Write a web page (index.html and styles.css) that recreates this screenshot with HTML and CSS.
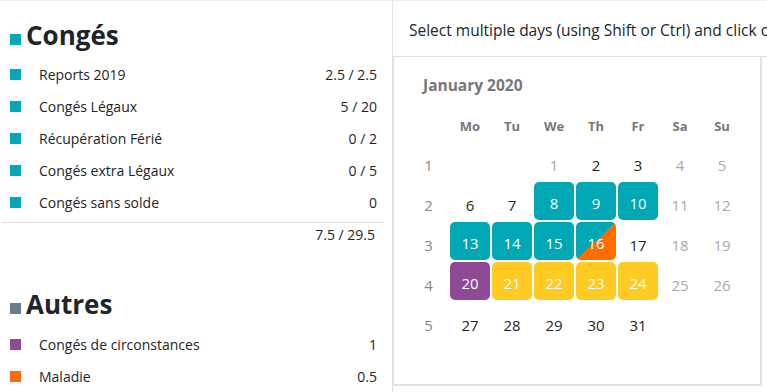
FILE: index.html
```html
<!doctype html>
<html lang="fr">
<head>
  <meta charset="UTF-8" />
  <meta name="viewport" content="width=device-width, initial-scale=1.0" />
  <title>Congés - Planning</title>
  <link rel="stylesheet" href="styles.css">
</head>
<body>
  <div class="app">
    <aside class="summary">
      <section class="group">
        <h2 class="group-title"><span class="swatch teal"></span>Congés</h2>
        <ul class="leave-list">
          <li><span class="swatch teal"></span><span class="name">Reports 2019</span><span class="value">2.5 / 2.5</span></li>
          <li><span class="swatch teal"></span><span class="name">Congés Légaux</span><span class="value">5 / 20</span></li>
          <li><span class="swatch teal"></span><span class="name">Récupération Férié</span><span class="value">0 / 2</span></li>
          <li><span class="swatch teal"></span><span class="name">Congés extra Légaux</span><span class="value">0 / 5</span></li>
          <li><span class="swatch teal"></span><span class="name">Congés sans solde</span><span class="value">0</span></li>
        </ul>
        <div class="total">7.5 / 29.5</div>
      </section>

      <section class="group group-other">
        <h2 class="group-title"><span class="swatch slate"></span>Autres</h2>
        <ul class="leave-list">
          <li><span class="swatch purple"></span><span class="name">Congés de circonstances</span><span class="value">1</span></li>
          <li><span class="swatch orange"></span><span class="name">Maladie</span><span class="value">0.5</span></li>
        </ul>
      </section>
    </aside>

    <main class="planner">
      <div class="hint">Select multiple days (using Shift or Ctrl) and click on the button to create a leave request</div>

      <div class="months">
        <div class="month">
          <div class="month-title">January 2020</div>
          <div class="cal-grid">
            <span class="wk"></span>
            <span class="dow">Mo</span><span class="dow">Tu</span><span class="dow">We</span><span class="dow">Th</span><span class="dow">Fr</span><span class="dow">Sa</span><span class="dow">Su</span>

            <span class="wk">1</span>
            <span class="day"></span><span class="day"></span>
            <span class="day off">1</span><span class="day">2</span><span class="day">3</span><span class="day off">4</span><span class="day off">5</span>

            <span class="wk">2</span>
            <span class="day">6</span><span class="day">7</span>
            <span class="day"><b class="mark teal">8</b></span><span class="day"><b class="mark teal">9</b></span><span class="day"><b class="mark teal">10</b></span>
            <span class="day off">11</span><span class="day off">12</span>

            <span class="wk">3</span>
            <span class="day"><b class="mark teal">13</b></span><span class="day"><b class="mark teal">14</b></span><span class="day"><b class="mark teal">15</b></span>
            <span class="day"><b class="mark split">16</b></span><span class="day">17</span>
            <span class="day off">18</span><span class="day off">19</span>

            <span class="wk">4</span>
            <span class="day"><b class="mark purple">20</b></span><span class="day"><b class="mark yellow">21</b></span><span class="day"><b class="mark yellow">22</b></span>
            <span class="day"><b class="mark yellow">23</b></span><span class="day"><b class="mark yellow">24</b></span>
            <span class="day off">25</span><span class="day off">26</span>

            <span class="wk">5</span>
            <span class="day">27</span><span class="day">28</span><span class="day">29</span><span class="day">30</span><span class="day">31</span>
            <span class="day"></span><span class="day"></span>
          </div>
        </div>
      </div>
    </main>
  </div>
</body>
</html>
```

FILE: styles.css
```css
* {
  box-sizing: border-box;
  margin: 0;
  padding: 0;
}

body {
  font-family: 'Open Sans', 'Noto Sans', sans-serif;
  font-size: 14px;
  color: #212529;
  background: #fff;
  width: 767px;
  height: 392px;
  overflow: hidden;
}

.app {
  display: flex;
  height: 392px;
  border-top: 1px solid #eeeeee;
}

/* ===== Left summary ===== */
.summary {
  width: 393px;
  flex-shrink: 0;
  border-right: 1px solid #e2e2e4;
  padding: 16px 15px 0 2px;
}

.group-title {
  display: flex;
  align-items: baseline;
  font-size: 26px;
  font-weight: 700;
  line-height: 36px;
  color: #212529;
  padding-left: 8px;
}

.group-title .swatch {
  margin-right: 5px;
}

.swatch {
  display: inline-block;
  width: 11px;
  height: 11px;
  flex-shrink: 0;
}

.teal { background: #00a7b4; }
.slate { background: #687c89; }
.purple { background: #8e4a96; }
.orange { background: #ff6c00; }
.yellow { background: #ffca22; }

.leave-list {
  list-style: none;
  margin-top: 5px;
  padding-left: 8px;
}

.leave-list li {
  display: flex;
  align-items: center;
  height: 32px;
}

.leave-list .name {
  flex: 1;
  margin-left: 18px;
}

.leave-list .value {
  text-align: right;
}

.total {
  margin-top: 4px;
  border-top: 1px solid #dddddd;
  text-align: right;
  line-height: 24px;
  padding-right: 9px;
  margin-right: -7px;
}

.group-other {
  margin-top: 39px;
}

.group-other .leave-list {
  margin-top: 6px;
}

/* ===== Right planner ===== */
.planner {
  flex: 1;
  min-width: 0;
  display: flex;
  flex-direction: column;
}

.hint {
  height: 56px;
  line-height: 58px;
  padding-left: 16px;
  font-size: 15.5px;
  white-space: nowrap;
  overflow: hidden;
  border-bottom: 1px solid #e2e2e4;
  color: #212529;
}

.months {
  display: flex;
}

.month {
  width: 369px;
  height: 329px;
  border-left: 1px solid #e2e2e4;
  border-right: 2px solid #e2e2e4;
  border-bottom: 2px solid #e2e2e4;
  padding: 18px 0 0 14px;
}

.month-title {
  font-size: 15.5px;
  font-weight: 700;
  color: #777777;
  line-height: 20px;
  padding-left: 15px;
  margin-bottom: 17px;
}

.cal-grid {
  display: grid;
  grid-template-columns: 41px repeat(7, 42px);
  grid-auto-rows: 40px;
  grid-template-rows: 29px;
  text-align: center;
  font-size: 15px;
}

.dow {
  font-size: 13px;
  font-weight: 700;
  color: #777777;
  line-height: 29px;
}

.wk {
  color: #888888;
  line-height: 40px;
  padding-top: 4px;
}

.day {
  position: relative;
  line-height: 40px;
  padding-top: 4px;
  color: #212529;
}

.day.off {
  color: #aaaaaa;
}

.mark {
  position: absolute;
  top: 1px;
  left: 1px;
  right: 1px;
  bottom: 1px;
  border-radius: 5px;
  color: #fff;
  font-weight: 400;
  line-height: 40px;
  padding-top: 1px;
}

.mark.split {
  background: linear-gradient(to bottom right, #00a7b4 50%, #ff6c00 50%);
}
```
